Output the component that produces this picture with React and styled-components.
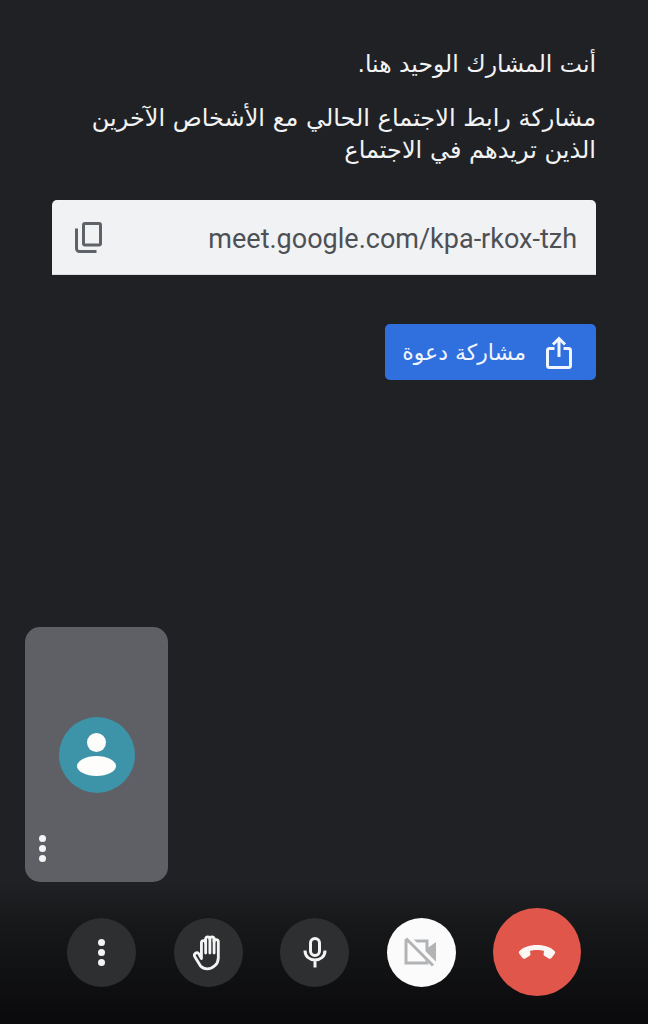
import React from "react";
import styled, { createGlobalStyle } from "styled-components";

const Global = createGlobalStyle`
  html, body {
    margin: 0;
    padding: 0;
    background: #202124;
  }
`;

const Screen = styled.div`
  width: 648px;
  height: 1024px;
  box-sizing: border-box;
  background: #202124;
  display: flex;
  flex-direction: column;
  overflow: hidden;
  font-family: "DejaVu Sans", sans-serif;
`;

const Info = styled.section`
  padding: 48px 52px 0;
  display: flex;
  flex-direction: column;
`;

const Message = styled.p`
  margin: 0 0 ${(p) => p.$gap || 0}px;
  direction: rtl;
  text-align: right;
  color: #f1f3f4;
  font-size: ${(p) => p.$size}px;
  line-height: 32px;
`;

const LinkBox = styled.div`
  margin-top: 34px;
  height: 75px;
  background: #f1f2f4;
  border-radius: 5px 5px 0 0;
  border-bottom: 1px solid #dadce0;
  box-sizing: border-box;
  display: flex;
  align-items: center;
  justify-content: space-between;
  padding: 0 19px 0 23px;
  color: #5f6368;
`;

const LinkText = styled.span`
  font-family: Roboto, "Liberation Sans", sans-serif;
  font-size: 27px;
  color: #4d5054;
  padding-top: 3px;
`;

const ShareRow = styled.div`
  margin-top: 49px;
  display: flex;
  justify-content: flex-end;
`;

const ShareButton = styled.button`
  width: 211px;
  height: 56px;
  border: 0;
  border-radius: 5px;
  background: #2f6fde;
  color: #f1f5fd;
  display: flex;
  flex-direction: row-reverse;
  align-items: center;
  justify-content: flex-start;
  gap: 20px;
  padding: 0 24px 0 0;
  direction: ltr;
  font-family: "DejaVu Sans", sans-serif;
  font-size: 22px;
`;

const Spacer = styled.div`
  flex: 1;
`;

const SelfTile = styled.div`
  position: relative;
  margin: 0 0 -26px 25px;
  width: 143px;
  height: 255px;
  flex: none;
  z-index: 1;
  border-radius: 15px;
  background: #5e6065;
  display: flex;
  align-items: center;
  justify-content: center;
`;

const Avatar = styled.div`
  width: 76px;
  height: 76px;
  border-radius: 50%;
  background: #3d93a8;
  display: flex;
  flex-direction: column;
  align-items: center;
  justify-content: center;
  gap: 4px;
`;

const AvatarHead = styled.div`
  width: 19px;
  height: 19px;
  border-radius: 50%;
  background: #fdfdfb;
`;

const AvatarBody = styled.div`
  width: 39px;
  height: 20px;
  border-radius: 50%;
  background: #fdfdfb;
`;

const Dots = styled.div`
  display: flex;
  flex-direction: column;
  align-items: center;
  gap: ${(p) => p.$gap}px;
`;

const Dot = styled.span`
  width: ${(p) => p.$size}px;
  height: ${(p) => p.$size}px;
  border-radius: 50%;
  background: #f4f4f4;
`;

const TileMenu = styled(Dots)`
  position: absolute;
  left: 14px;
  bottom: 20px;
`;

const Toolbar = styled.div`
  height: 168px;
  flex: none;
  box-sizing: border-box;
  background: linear-gradient(to bottom, #202124 0%, #202124 15%, #17181a 40%, #0a0a0c 100%);
  display: flex;
  align-items: center;
  padding: 52px 0 28px 67px;
  gap: 37.5px;
`;

const RoundButton = styled.button`
  flex: none;
  width: ${(p) => p.$size || 69}px;
  height: ${(p) => p.$size || 69}px;
  border: 0;
  padding: 0;
  border-radius: 50%;
  background: ${(p) => p.$bg || "#2e2f31"};
  color: ${(p) => p.$fg || "#f4f4f4"};
  display: flex;
  align-items: center;
  justify-content: center;
`;

const CopyIcon = () => (
  <svg width="27" height="31" viewBox="0 0 27 31" fill="none" stroke="currentColor" strokeWidth="3">
    <rect x="8.5" y="1.5" width="17" height="21.5" rx="1.5" />
    <path d="M1.5 6.5v20a3 3 0 0 0 3 3h17" />
  </svg>
);

const ShareIcon = () => (
  <svg width="26" height="33" viewBox="0 0 26 33" fill="none" stroke="currentColor" strokeWidth="3">
    <path d="M13 21V2.5M7 8.5l6-6 6 6" />
    <path d="M8.5 12.5H3.5a2 2 0 0 0-2 2v15a2 2 0 0 0 2 2h19a2 2 0 0 0 2-2v-15a2 2 0 0 0-2-2h-5" />
  </svg>
);

const HandIcon = () => (
  <svg width="30" height="37" viewBox="0 0 32 39" fill="none" stroke="currentColor" strokeWidth="3" strokeLinejoin="round" strokeLinecap="round">
    <path d="M9 26V9a2.25 2.25 0 0 1 4.5 0V5a2.25 2.25 0 0 1 4.5 0v0a2.25 2.25 0 0 1 4.5 0v3a2.25 2.25 0 0 1 4.5 0v17a12 12 0 0 1-12 12c-3 0-5-1-7-3L2 24a2.6 2.6 0 0 1 4-3.3L9 26Z" />
    <path d="M13.5 9v11M18 5v15M22.5 5v15" />
  </svg>
);

const MicIcon = () => (
  <svg width="24" height="31" viewBox="0 0 24 31" fill="none" stroke="currentColor" strokeWidth="3">
    <rect x="7.5" y="1.5" width="9" height="17" rx="4.5" />
    <path d="M2 13.5c0 6 4.5 9.5 10 9.5s10-3.500 10-9.500M12 23v7.500" />
  </svg>
);

const VideoOffIcon = () => (
  <svg width="34" height="30" viewBox="0 0 34 30" fill="none" stroke="#b2b3b5" strokeWidth="3">
    <path d="M2 4v22h21V4Z" />
    <path d="M23 11.500 32 5v20l-9-6.500" fill="#b2b3b5" stroke="none" />
    <path d="M4 1l28 28" stroke="#fbfbfb" strokeWidth="6" />
    <path d="M2 1.500l27 27" />
  </svg>
);

const EndCallIcon = () => (
  <svg width="38" height="15" viewBox="0 0 38 15" fill="#fbf7f5">
    <path d="M19 0C11 0 5 2.500 1.500 6c-.9.900-.9 2 0 3l3 4c.8.900 1.800 1 2.800.4l4-2.400c.8-.5 1.200-1.200 1.100-2.100L12 6c4-1.200 10-1.200 14 0l-.4 2.900c-.1.900.3 1.600 1.100 2.100l4 2.400c1 .6 2 .5 2.800-.4l3-4c.9-1 .9-2.100 0-3C33 2.500 27 0 19 0Z" />
  </svg>
);

const App = () => (
  <Screen>
    <Global />
    <Info>
      <Message $size={23.5} $gap={22}>أنت المشارك الوحيد هنا.</Message>
      <Message $size={24}>
        مشاركة رابط الاجتماع الحالي مع الأشخاص الآخرين
        <br />
        الذين تريدهم في الاجتماع
      </Message>
      <LinkBox>
        <CopyIcon />
        <LinkText>meet.google.com/kpa-rkox-tzh</LinkText>
      </LinkBox>
      <ShareRow>
        <ShareButton>
          <ShareIcon />
          <span dir="rtl">مشاركة دعوة</span>
        </ShareButton>
      </ShareRow>
    </Info>
    <Spacer />
    <SelfTile>
      <Avatar>
        <AvatarHead />
        <AvatarBody />
      </Avatar>
      <TileMenu $gap={3}>
        <Dot $size={7} />
        <Dot $size={7} />
        <Dot $size={7} />
      </TileMenu>
    </SelfTile>
    <Toolbar>
      <RoundButton>
        <Dots $gap={3}>
          <Dot $size={7} />
          <Dot $size={7} />
          <Dot $size={7} />
        </Dots>
      </RoundButton>
      <RoundButton>
        <HandIcon />
      </RoundButton>
      <RoundButton>
        <MicIcon />
      </RoundButton>
      <RoundButton $bg="#fbfbfb">
        <VideoOffIcon />
      </RoundButton>
      <RoundButton $bg="#e0564a" $size={88}>
        <EndCallIcon />
      </RoundButton>
    </Toolbar>
  </Screen>
);

export default App;
